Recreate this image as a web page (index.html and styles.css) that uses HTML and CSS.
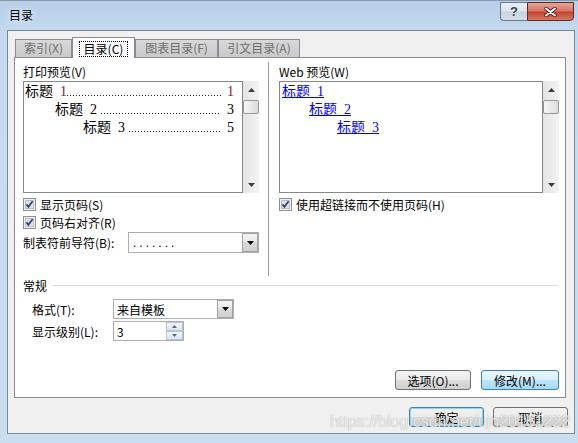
FILE: index.html
```html
<!DOCTYPE html>
<html lang="zh">
<head>
    <meta charset="UTF-8">
    <title>目录</title>
    <link rel="stylesheet" href="styles.css">
</head>
<body>
    <div class="window">
        <div class="titlebar">
            <span class="title">目录</span>
            <div class="caption-btns">
                <span class="cap-help">?</span>
                <span class="cap-close">
                    <svg width="13" height="10" viewBox="0 0 13 10">
                        <path d="M2 1.5 L11 8.5 M11 1.5 L2 8.5" stroke="#4a1e18" stroke-width="3.6" stroke-linecap="round"/>
                        <path d="M2 1.5 L11 8.5 M11 1.5 L2 8.5" stroke="#fff" stroke-width="2" stroke-linecap="round"/>
                    </svg>
                </span>
            </div>
        </div>

        <div class="client">
            <div class="tabs">
                <div class="tab tab-1">索引(X)</div>
                <div class="tab active"><span class="focus">目录(C)</span></div>
                <div class="tab tab-3">图表目录(F)</div>
                <div class="tab tab-4">引文目录(A)</div>
            </div>

            <div class="panel">
                <div class="preview-row">
                    <!-- 打印预览 -->
                    <div class="col-left">
                        <div class="label">打印预览(V)</div>
                        <div class="preview">
                            <div class="page">
                                <div class="toc-line red"><span class="h">标题</span><span class="num">1</span><span class="dots"></span><span class="pg">1</span></div>
                                <div class="toc-line lvl2"><span class="h">标题</span><span class="num">2</span><span class="dots"></span><span class="pg">3</span></div>
                                <div class="toc-line lvl3"><span class="h">标题</span><span class="num">3</span><span class="dots"></span><span class="pg">5</span></div>
                            </div>
                            <div class="scrollbar">
                                <div class="sb-btn"><svg width="7" height="4" viewBox="0 0 7 4"><path d="M0 4 L3.5 0 L7 4Z" fill="#3c3c3c"/></svg></div>
                                <div class="sb-thumb"></div>
                                <div class="sb-btn sb-down"><svg width="7" height="4" viewBox="0 0 7 4"><path d="M0 0 L3.5 4 L7 0Z" fill="#3c3c3c"/></svg></div>
                            </div>
                        </div>
                        <div class="check first">
                            <svg class="cb" width="13" height="13" viewBox="0 0 13 13"><rect x="0.5" y="0.5" width="12" height="12" fill="#f2f2f2" stroke="#8e8f8f"/><rect x="2.5" y="2.5" width="8" height="8" fill="#dfe3ea" stroke="#b9bcc3"/><path d="M3.4 6.4 L5.4 8.8 L9.6 3.2" fill="none" stroke="#2a3f8a" stroke-width="1.7"/></svg>
                            <span>显示页码(S)</span>
                        </div>
                        <div class="check">
                            <svg class="cb" width="13" height="13" viewBox="0 0 13 13"><rect x="0.5" y="0.5" width="12" height="12" fill="#f2f2f2" stroke="#8e8f8f"/><rect x="2.5" y="2.5" width="8" height="8" fill="#dfe3ea" stroke="#b9bcc3"/><path d="M3.4 6.4 L5.4 8.8 L9.6 3.2" fill="none" stroke="#2a3f8a" stroke-width="1.7"/></svg>
                            <span>页码右对齐(R)</span>
                        </div>
                        <div class="leader-row">
                            <span class="leader-label">制表符前导符(B):</span>
                            <div class="select leader-select">
                                <span class="select-value dots-value">.......</span>
                                <span class="drop"><svg width="7" height="4" viewBox="0 0 7 4"><path d="M0 0 L3.5 4 L7 0Z" fill="#000"/></svg></span>
                            </div>
                        </div>
                    </div>

                    <div class="divider"></div>

                    <!-- Web 预览 -->
                    <div class="col-right">
                        <div class="label">Web 预览(W)</div>
                        <div class="preview">
                            <div class="page web">
                                <div class="web-line"><a href="#">标题&nbsp;&nbsp;1</a></div>
                                <div class="web-line lvl2"><a href="#">标题&nbsp;&nbsp;2</a></div>
                                <div class="web-line lvl3"><a href="#">标题&nbsp;&nbsp;3</a></div>
                            </div>
                            <div class="scrollbar">
                                <div class="sb-btn"><svg width="7" height="4" viewBox="0 0 7 4"><path d="M0 4 L3.5 0 L7 4Z" fill="#3c3c3c"/></svg></div>
                                <div class="sb-thumb"></div>
                                <div class="sb-btn sb-down"><svg width="7" height="4" viewBox="0 0 7 4"><path d="M0 0 L3.5 4 L7 0Z" fill="#3c3c3c"/></svg></div>
                            </div>
                        </div>
                        <div class="check first">
                            <svg class="cb" width="13" height="13" viewBox="0 0 13 13"><rect x="0.5" y="0.5" width="12" height="12" fill="#f2f2f2" stroke="#8e8f8f"/><rect x="2.5" y="2.5" width="8" height="8" fill="#dfe3ea" stroke="#b9bcc3"/><path d="M3.4 6.4 L5.4 8.8 L9.6 3.2" fill="none" stroke="#2a3f8a" stroke-width="1.7"/></svg>
                            <span>使用超链接而不使用页码(H)</span>
                        </div>
                    </div>
                </div>

                <!-- 常规 -->
                <div class="group-head">
                    <span>常规</span>
                    <i class="group-line"></i>
                </div>
                <div class="field first">
                    <span class="field-label">格式(T):</span>
                    <div class="select format-select">
                        <span class="select-value">来自模板</span>
                        <span class="drop"><svg width="7" height="4" viewBox="0 0 7 4"><path d="M0 0 L3.5 4 L7 0Z" fill="#000"/></svg></span>
                    </div>
                </div>
                <div class="field">
                    <span class="field-label">显示级别(L):</span>
                    <div class="spin">
                        <span class="select-value">3</span>
                        <span class="spin-btns">
                            <span class="spin-btn"><svg width="5" height="3" viewBox="0 0 5 3"><path d="M0 3 L2.5 0 L5 3Z" fill="#4b6a8c"/></svg></span>
                            <span class="spin-btn"><svg width="5" height="3" viewBox="0 0 5 3"><path d="M0 0 L2.5 3 L5 0Z" fill="#4b6a8c"/></svg></span>
                        </span>
                    </div>
                </div>

                <div class="panel-btns">
                    <button class="btn btn-options">选项(O)...</button>
                    <button class="btn hot btn-modify">修改(M)...</button>
                </div>
            </div>

            <div class="dialog-btns">
                <button class="btn default">确定</button>
                <button class="btn">取消</button>
            </div>
        </div>

        <div class="watermark">https://blog.csdn.net/ujn20161222</div>
    </div>
</body>
</html>
```

FILE: styles.css
```css
/* Reset styles */
* {
    margin: 0;
    padding: 0;
    box-sizing: border-box;
}

body {
    width: 578px;
    height: 443px;
    overflow: hidden;
    font-family: "Noto Sans CJK SC", "Liberation Sans", sans-serif;
    font-size: 12px;
    color: #000;
    background: #c6daee;
}

/* 窗口外框 */
.window {
    position: relative;
    width: 578px;
    height: 443px;
    background: linear-gradient(180deg, #b6cee8 0px, #c4d9ef 30px, #cadef2 100%);
    border-top: 1px solid #8b98a6;
    display: flex;
    flex-direction: column;
}

.titlebar {
    height: 29px;
    display: flex;
    align-items: flex-start;
}

.title {
    margin: 7px 0 0 9px;
    line-height: 14px;
    font-size: 12px;
    text-shadow: 0 0 6px rgba(255, 255, 255, 0.9);
}

.caption-btns {
    margin: 1px 4px 0 auto;
    display: flex;
    height: 19px;
}

.cap-help {
    width: 27px;
    height: 19px;
    border: 1px solid #6c7b8b;
    border-right: none;
    border-radius: 0 0 0 4px;
    background: linear-gradient(180deg, #e9eff6 0%, #dbe4ee 45%, #c6d3e1 55%, #d4dfea 100%);
    font: bold 13px "Liberation Sans", sans-serif;
    color: #33404f;
    text-shadow: 0 0 2px #fff;
    display: flex;
    align-items: center;
    justify-content: center;
}

.cap-close {
    width: 47px;
    height: 19px;
    border: 1px solid #5b2b25;
    border-radius: 0 0 4px 0;
    background: linear-gradient(180deg, #e7a597 0%, #d7776a 45%, #c5432f 55%, #d57a62 100%);
    display: flex;
    align-items: center;
    justify-content: center;
}

/* 客户区 */
.client {
    margin-left: 7px;
    width: 568px;
    height: 404px;
    border: 1px solid #7b8896;
    background: #f0f0f0;
}

.tabs {
    position: relative;
    z-index: 1;
    display: flex;
    align-items: flex-end;
    height: 21px;
    margin: 6px 0 -1px 7px;
}

.tab {
    height: 18px;
    margin-bottom: 1px;
    border: 1px solid #898c95;
    border-bottom: none;
    background: linear-gradient(180deg, #d9d9d9, #c9c9c9);
    color: #6e6e6e;
    line-height: 16px;
    text-align: center;
}

.tab-1 { width: 57px; }
.tab-3 { width: 83px; }
.tab-4 { width: 82px; }

.tab.active {
    width: 63px;
    height: 21px;
    margin-bottom: 0;
    background: #fff;
    color: #000;
    padding-top: 3px;
}

.focus {
    display: inline-block;
    border: 1px dotted #000;
    padding: 0 4px;
    line-height: 14px;
}

.panel {
    margin-left: 6px;
    width: 552px;
    height: 341px;
    border: 1px solid #898c95;
    background: #fff;
    padding: 0 6px 0 8px;
}

.preview-row {
    display: flex;
    height: 218px;
}

.col-left {
    width: 236px;
    margin-top: 6px;
}

.col-right {
    width: 280px;
    margin-top: 6px;
}

.divider {
    width: 1px;
    height: 214px;
    margin: 4px 10px 0 9px;
    background: #a0a0a0;
}

.label {
    height: 16px;
    line-height: 16px;
}

.preview {
    display: flex;
    height: 112px;
    margin-top: 1px;
}

.page {
    flex: 1;
    border: 1px solid #828790;
    background: #fff;
    padding: 1px 8px 0 1px;
    overflow: hidden;
}

/* 打印预览里的目录行 */
.toc-line {
    display: flex;
    height: 18px;
    line-height: 18px;
    font-family: "Liberation Serif", "Noto Sans CJK SC", serif;
    font-size: 14px;
    white-space: nowrap;
}

.toc-line .h {
    margin-right: 7px;
}

.toc-line .dots {
    flex: 1;
    margin: 0 6px 0 4px;
    background: linear-gradient(90deg, #222 1px, transparent 1px) 0 12px / 3px 1px repeat-x;
}

.toc-line.red .dots {
    margin-left: 0;
}

.toc-line.red .num,
.toc-line.red .pg {
    color: #7a1838;
}

.lvl2 { padding-left: 30px; }
.lvl3 { padding-left: 58px; }

.page.web {
    padding: 1px 0 0 2px;
}

.web-line {
    height: 18px;
    line-height: 18px;
    font-family: "Liberation Serif", "Noto Sans CJK SC", serif;
    font-size: 14px;
}

.web-line a {
    color: #0000ff;
    text-decoration: underline;
}

.web-line.lvl2 { padding-left: 27px; }
.web-line.lvl3 { padding-left: 55px; }

.scrollbar {
    width: 16px;
    display: flex;
    flex-direction: column;
    background: linear-gradient(90deg, #e4e4e4, #f3f3f3);
}

.sb-btn {
    height: 17px;
    display: flex;
    align-items: center;
    justify-content: center;
}

.sb-thumb {
    height: 14px;
    margin-top: 2px;
    border: 1px solid #979797;
    border-radius: 2px;
    background: linear-gradient(90deg, #f6f6f6, #dcdcdc);
}

.sb-down {
    margin-top: auto;
}

.check {
    display: flex;
    align-items: center;
    gap: 4px;
    height: 18px;
}

.check.first {
    margin-top: 2px;
}

.cb {
    flex: none;
}

.leader-row {
    display: flex;
    align-items: center;
    height: 21px;
    margin-top: 1px;
}

.leader-label {
    width: 105px;
}

.select {
    display: flex;
    align-items: center;
    border: 1px solid #abadb3;
    background: #fff;
}

.leader-select {
    width: 131px;
    height: 21px;
}

.select-value {
    flex: 1;
    padding-left: 3px;
}

.dots-value {
    letter-spacing: 3px;
    padding-left: 4px;
    font-family: "Liberation Sans", sans-serif;
}

.drop {
    width: 16px;
    height: 100%;
    border: 1px solid #a3a3a3;
    background: linear-gradient(180deg, #f4f4f4 0%, #e9e9e9 50%, #dadada 50%, #cfcfcf 100%);
    display: flex;
    align-items: center;
    justify-content: center;
}

/* 常规 */
.group-head {
    display: flex;
    align-items: center;
    height: 16px;
    margin-top: 1px;
}

.group-line {
    flex: 1;
    height: 1px;
    margin: 0 1px 0 5px;
    background: #d5dfe5;
}

.field {
    display: flex;
    align-items: center;
    height: 20px;
    margin-top: 2px;
    padding-left: 9px;
}

.field.first {
    margin-top: 6px;
}

.field-label {
    width: 81px;
}

.format-select {
    width: 121px;
    height: 20px;
}

.spin {
    display: flex;
    align-items: center;
    width: 71px;
    height: 20px;
    border: 1px solid #abadb3;
    background: #fff;
}

.spin-btns {
    width: 17px;
    height: 100%;
    display: flex;
    flex-direction: column;
}

.spin-btn {
    flex: 1;
    border: 1px solid #b9c4cf;
    background: linear-gradient(180deg, #f2f6fa, #dbe5ef);
    display: flex;
    align-items: center;
    justify-content: center;
}

/* 按钮 */
.btn {
    height: 20px;
    border: 1px solid #707070;
    border-radius: 3px;
    background: linear-gradient(180deg, #f2f2f2 0%, #ebebeb 50%, #dddddd 50%, #cfcfcf 100%);
    font: inherit;
    color: #000;
    display: flex;
    align-items: center;
    justify-content: center;
}

.btn.hot {
    border-color: #3c7fb1;
    background: linear-gradient(180deg, #eaf6fd 0%, #d9f0fc 50%, #bee6fd 50%, #a7d9f5 100%);
}

.btn.default {
    border-color: #3c7fb1;
    box-shadow: inset 0 0 0 1px #8fd6f5;
}

.panel-btns {
    display: flex;
    justify-content: flex-end;
    gap: 10px;
    margin-top: 29px;
}

.btn-options { width: 76px; }
.btn-modify { width: 78px; }

.dialog-btns {
    display: flex;
    justify-content: flex-end;
    gap: 9px;
    margin: 9px 6px 0 0;
}

.dialog-btns .btn {
    width: 75px;
}

/* 水印 */
.watermark {
    position: absolute;
    left: 330px;
    top: 412px;
    font-family: "Liberation Sans", sans-serif;
    font-size: 16px;
    line-height: 18px;
    color: rgba(255, 255, 255, 0.8);
    text-shadow: 0 0 1px rgba(110, 110, 110, 0.7);
    white-space: nowrap;
}
```
